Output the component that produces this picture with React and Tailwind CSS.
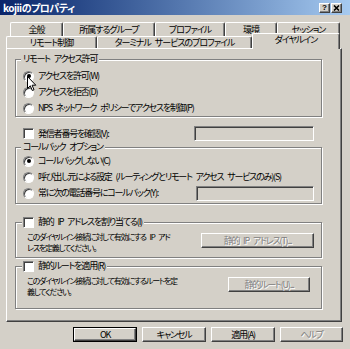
import React from 'react';

const raised = 'border border-t-white border-l-white border-r-[#404040] border-b-[#404040] shadow-[inset_-1px_-1px_#808080]';
const sunken = 'border border-t-[#808080] border-l-[#808080] border-r-white border-b-white shadow-[inset_1px_1px_#404040]';
const etched = 'border border-[#808080] shadow-[inset_1px_1px_#fff,1px_1px_#fff]';

const Box = ({ round, checked }) => (
  <div className={`flex items-center justify-center shrink-0 w-[11px] h-[11px] bg-white ${round ? 'rounded-full' : ''} ${sunken}`}>
    {checked && <div className="w-[4px] h-[4px] rounded-full bg-black" />}
  </div>
);

const Radio = ({ checked }) => <Box round checked={checked} />;
const Check = () => <Box />;

const Tab = ({ w, label, selected }) => (
  <div
    className={`flex items-center justify-center leading-none bg-[#d4d0c8] rounded-t-[2px] border border-b-0 border-t-white border-l-white border-r-[#404040] shadow-[inset_-1px_0_#808080] whitespace-nowrap ${
      selected ? 'relative z-10 h-[16px] -mb-[1px] pb-[4px]' : 'h-[14px]'
    } ${w}`}
  >
    {label}
  </div>
);

const Button = ({ children, disabled, def, className = '' }) => (
  <div className={`${def ? 'border border-black' : ''} ${className}`}>
    <div
      className={`flex items-center justify-center h-full w-full leading-none bg-[#d4d0c8] ${raised} ${
        disabled ? 'text-[#808080] [text-shadow:1px_1px_#fff]' : ''
      }`}
    >
      {children}
    </div>
  </div>
);

const Cursor = () => (
  <svg className="absolute left-[4px] top-[8px] z-20" width="10" height="16" viewBox="0 0 10 16">
    <path d="M0.5 0.5 L0.5 12.5 L3.3 9.8 L5.3 14.5 L7 13.8 L5.1 9.2 L8.8 9.2 Z" fill="#fff" stroke="#000" strokeWidth="1" strokeLinejoin="round" />
  </svg>
);

const CheckLegend = ({ label }) => (
  <legend className="ml-[6px] pr-[2px] pl-[1px] bg-[#d4d0c8]">
    <div className="flex items-center gap-[4px]">
      <Check />
      <span>{label}</span>
    </div>
  </legend>
);

export default function App() {
  return (
    <div className="w-[350px] h-[349px] overflow-hidden flex flex-col bg-[#d4d0c8] text-black text-[9px] leading-[12px] tracking-[-1.2px] [word-spacing:3px] font-['Noto_Sans_CJK_JP','Noto_Sans',sans-serif] [font-feature-settings:'palt']">
      {/* Title bar */}
      <div className="h-[15px] shrink-0 flex items-center pl-[3px] pr-[8px] bg-gradient-to-r from-[#0a246a] to-[#a6caf0]">
        <span className="text-white font-bold text-[10px] tracking-[-0.5px]">kojiiのプロパティ</span>
        <div className="ml-auto flex gap-[1px]">
          <div className={`w-[11px] h-[10px] flex items-center justify-center bg-[#d4d0c8] ${raised} text-[8px] leading-none tracking-normal font-bold font-['Liberation_Sans',sans-serif]`}>?</div>
          <div className={`w-[11px] h-[10px] flex items-center justify-center bg-[#d4d0c8] ${raised}`}>
            <svg width="7" height="6" viewBox="0 0 7 6">
              <path d="M1 0.5 L6 5.5 M6 0.5 L1 5.5" stroke="#000" strokeWidth="1.6" />
            </svg>
          </div>
        </div>
      </div>

      {/* Tabs */}
      <div className="mt-[7px] flex flex-col shrink-0 tracking-[-1px]">
        <div className="flex ml-[10px]">
          <Tab w="w-[53px]" label="全般" />
          <Tab w="w-[92px]" label="所属するグループ" />
          <Tab w="w-[70px]" label="プロファイル" />
          <Tab w="w-[52px]" label="環境" />
          <Tab w="w-[63px]" label="セッション" />
        </div>
        <div className="flex items-end ml-[6px] h-[12px]">
          <Tab w="w-[91px] !h-[12px]" label="リモート制御" />
          <Tab w="w-[155px] !h-[12px]" label="ターミナル サービスのプロファイル" />
          <Tab w="w-[88px]" label="ダイヤルイン" selected />
        </div>
      </div>

      {/* Panel */}
      <div className={`ml-[6px] w-[336px] h-[274px] shrink-0 flex flex-col pl-[8px] pr-[19px] ${raised}`}>
        <fieldset className={`mt-[4px] ${etched}`}>
          <legend className="ml-[5px] px-[2px] bg-[#d4d0c8]">リモート アクセス許可</legend>
          <div className="flex flex-col pt-[3px] pl-[7px]">
            <div className="relative flex items-center gap-[4px] h-[16px]">
              <Radio checked />
              <span>アクセスを許可(W)</span>
              <Cursor />
            </div>
            <div className="flex items-center gap-[4px] h-[16px]">
              <Radio />
              <span>アクセスを拒否(D)</span>
            </div>
            <div className="flex items-center gap-[4px] h-[16px]">
              <Radio />
              <span>NPS ネットワーク ポリシーでアクセスを制御(P)</span>
            </div>
          </div>
        </fieldset>

        <div className="mt-[9px] pl-[8px] pr-[8px]">
          <div className="h-[15px] flex items-center gap-[4px]">
            <Check />
            <span>発信者番号を確認(V):</span>
            <div className={`ml-auto w-[120px] h-[15px] bg-[#d4d0c8] ${sunken}`} />
          </div>
        </div>

        <fieldset className={`${etched}`}>
          <legend className="ml-[5px] px-[2px] bg-[#d4d0c8]">コールバック オプション</legend>
          <div className="flex flex-col pb-[2px] pl-[7px] pr-[7px]">
            <div className="flex items-center gap-[4px] h-[16px]">
              <Radio checked />
              <span>コールバックしない(C)</span>
            </div>
            <div className="flex items-center gap-[4px] h-[16px]">
              <Radio />
              <span className="whitespace-nowrap">呼び出し元による設定 (ルーティングとリモート アクセス サービスのみ)(S)</span>
            </div>
            <div className="flex items-center gap-[4px] h-[16px]">
              <Radio />
              <span>常に次の電話番号にコールバック(Y):</span>
              <div className={`ml-auto w-[118px] h-[15px] bg-[#d4d0c8] ${sunken}`} />
            </div>
          </div>
        </fieldset>

        <fieldset className={`mt-[12px] ${etched}`}>
          <CheckLegend label="静的 IP アドレスを割り当てる(I)" />
          <div className="flex pt-[3px] pb-[4px] pl-[11px] pr-[7px]">
            <div className="w-[172px] flex flex-col whitespace-nowrap text-[8px] tracking-[-1.2px]">
              <span className="h-[11px] leading-[11px]">このダイヤルイン接続に対して有効にする IP アド</span>
              <span className="h-[11px] leading-[11px]">レスを定義してください。</span>
            </div>
            <Button disabled className="ml-auto mt-[2px] w-[113px] h-[15px]">静的 IP アドレス(T)...</Button>
          </div>
        </fieldset>

        <fieldset className={`mt-[2px] ${etched}`}>
          <CheckLegend label="静的ルートを適用(R)" />
          <div className="flex pt-[3px] pb-[11px] pl-[11px] pr-[11px]">
            <div className="w-[172px] flex flex-col whitespace-nowrap text-[8px] tracking-[-1.2px]">
              <span className="h-[11px] leading-[11px]">このダイヤルイン接続に対して有効にするルートを定</span>
              <span className="h-[11px] leading-[11px]">義してください。</span>
            </div>
            <Button disabled className="ml-auto mt-[2px] w-[82px] h-[15px]">静的ルート(U)...</Button>
          </div>
        </fieldset>
      </div>

      {/* Bottom buttons */}
      <div className="mt-[5px] ml-[73px] flex gap-[5px] h-[15px] shrink-0">
        <Button def className="w-[64px]">OK</Button>
        <Button className="w-[64px]">キャンセル</Button>
        <Button className="w-[64px]">適用(A)</Button>
        <Button disabled className="w-[63px]">ヘルプ</Button>
      </div>
    </div>
  );
}
